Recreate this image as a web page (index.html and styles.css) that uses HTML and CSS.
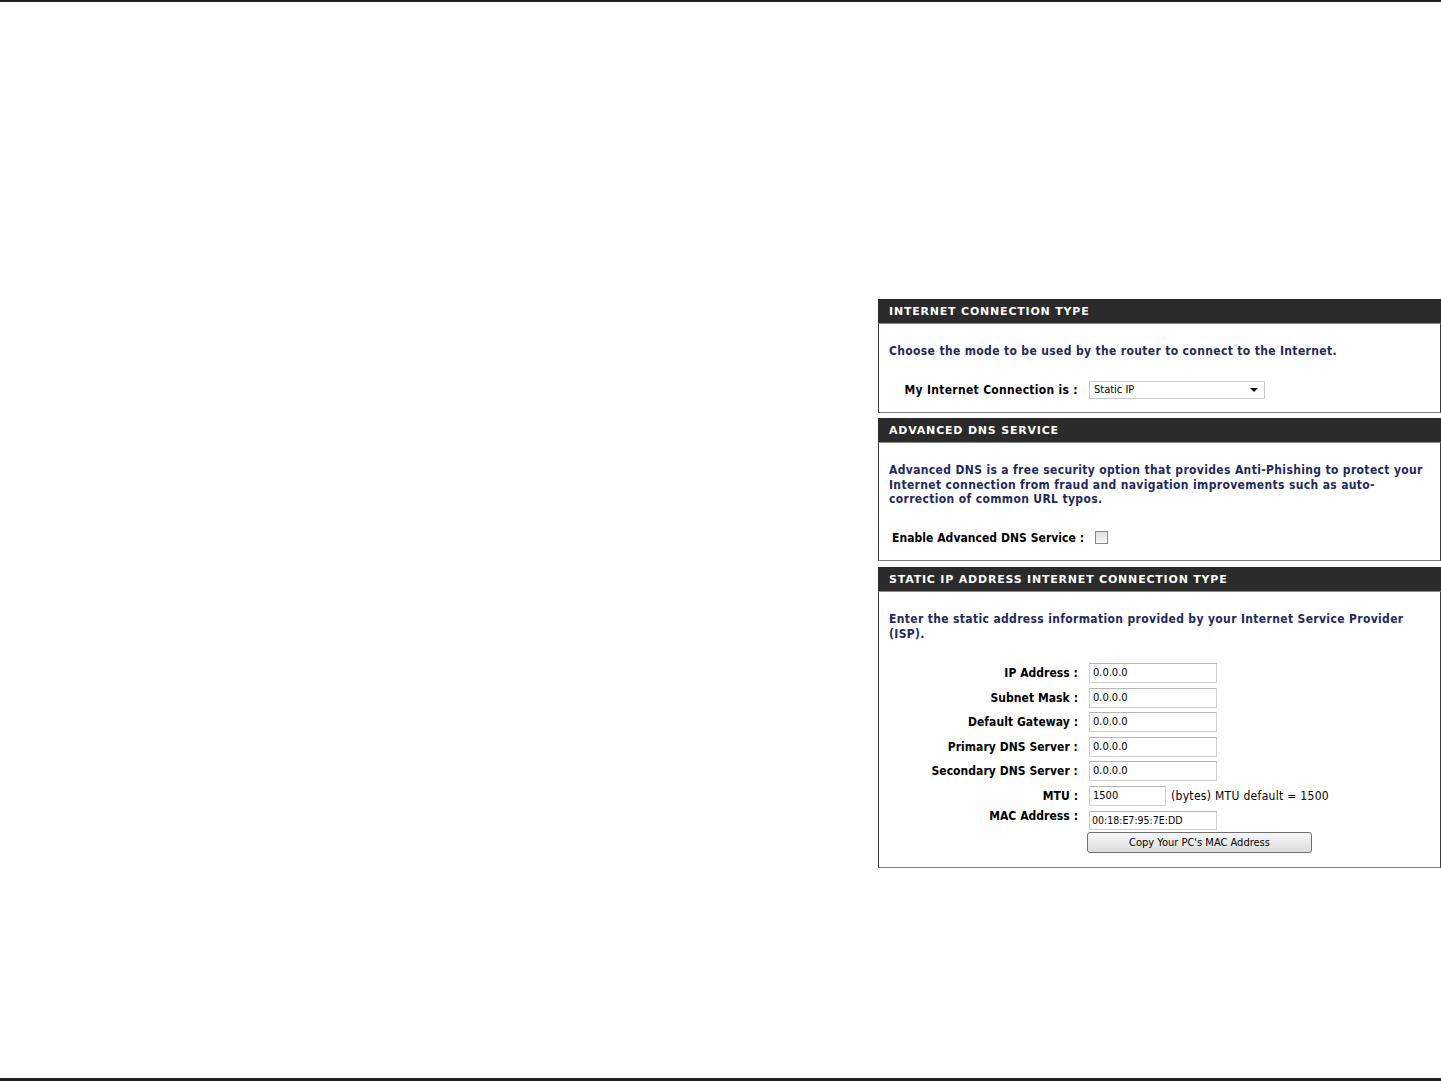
FILE: index.html
```html
<!DOCTYPE html>
<html lang="en">

<head>
    <meta charset="UTF-8">
    <meta name="viewport" content="width=device-width, initial-scale=1.0">
    <title>Internet Connection</title>
    <link rel="stylesheet" href="styles.css">
</head>

<body>
    <div class="pagina">
        <div class="regla-arriba"></div>
        <div class="contenido">
            <div class="vacio"></div>
            <div class="paneles">
                <div class="panel panel-primero">
                    <div class="panel-titulo">INTERNET CONNECTION TYPE</div>
                    <div class="panel-cuerpo panel-tipo">
                        <p class="descripcion">Choose the mode to be used by the router to connect to the Internet.</p>
                        <div class="fila fila-tipo">
                            <span class="etiqueta">My Internet Connection is :</span>
                            <div class="selector">
                                <span>Static IP</span>
                                <span class="flecha"></span>
                            </div>
                        </div>
                    </div>
                </div>

                <div class="panel">
                    <div class="panel-titulo">ADVANCED DNS SERVICE</div>
                    <div class="panel-cuerpo panel-dns">
                        <p class="descripcion">Advanced DNS is a free security option that provides Anti-Phishing to protect your Internet connection from fraud and navigation improvements such as auto-correction of common URL typos.</p>
                        <div class="fila-check">
                            <span class="etiqueta">Enable Advanced DNS Service :</span>
                            <span class="casilla"></span>
                        </div>
                    </div>
                </div>

                <div class="panel">
                    <div class="panel-titulo">STATIC IP ADDRESS INTERNET CONNECTION TYPE</div>
                    <div class="panel-cuerpo panel-ip">
                        <p class="descripcion">Enter the static address information provided by your Internet Service Provider (ISP).</p>
                        <div class="formulario">
                            <span class="etiqueta">IP Address :</span>
                            <div class="campo"><span class="caja">0.0.0.0</span></div>
                            <span class="etiqueta">Subnet Mask :</span>
                            <div class="campo"><span class="caja">0.0.0.0</span></div>
                            <span class="etiqueta">Default Gateway :</span>
                            <div class="campo"><span class="caja">0.0.0.0</span></div>
                            <span class="etiqueta">Primary DNS Server :</span>
                            <div class="campo"><span class="caja">0.0.0.0</span></div>
                            <span class="etiqueta">Secondary DNS Server :</span>
                            <div class="campo"><span class="caja">0.0.0.0</span></div>
                            <span class="etiqueta">MTU :</span>
                            <div class="campo"><span class="caja caja-corta">1500</span><span class="nota">(bytes) MTU default = 1500</span></div>
                            <span class="etiqueta etiqueta-mac">MAC Address :</span>
                            <div class="campo campo-mac">
                                <span class="caja caja-mac">00:18:E7:95:7E:DD</span>
                                <button class="boton-mac">Copy Your PC's MAC Address</button>
                            </div>
                        </div>
                    </div>
                </div>
            </div>
        </div>
        <div class="regla-abajo"></div>
    </div>
</body>

</html>
```

FILE: styles.css
```css
* {
    margin: 0;
    padding: 0;
    box-sizing: border-box;
}

body {
    background-color: #fff;
    font-family: "DejaVu Sans Condensed", "DejaVu Sans", sans-serif;
    font-size: 12px;
    color: #000;
}

.pagina {
    height: 1081px;
    display: flex;
    flex-direction: column;
}

.regla-arriba {
    height: 2px;
    background-color: #231f20;
}

.regla-abajo {
    height: 3px;
    background-color: #231f20;
}

.contenido {
    flex: 1;
    display: grid;
    grid-template-columns: 878px 563px;
    padding-top: 297px;
}

.paneles {
    display: flex;
    flex-direction: column;
    gap: 6px;
}

.panel-primero {
    margin-bottom: -1px;
}

.panel-titulo {
    height: 25px;
    line-height: 26px;
    padding-left: 11px;
    background-color: #2b2b2b;
    border-bottom: 1px solid #8a8a8a;
    color: #fff;
    font-family: "DejaVu Sans", sans-serif;
    font-weight: bold;
    font-size: 11px;
    letter-spacing: 0.8px;
}

.panel-cuerpo {
    border: 1px solid #3a3a3a;
    border-top: none;
    border-bottom-color: #777;
    padding-left: 10px;
}

.descripcion {
    color: #1f2a5c;
    font-weight: bold;
    line-height: 14.5px;
    letter-spacing: 0.35px;
    padding-right: 8px;
}

.etiqueta {
    font-weight: bold;
    text-align: right;
    letter-spacing: 0.05px;
}

.panel-tipo {
    height: 89px;
    padding-top: 20px;
}

.fila-tipo {
    display: flex;
    align-items: center;
    margin-top: 22px;
}

.fila-tipo .etiqueta {
    width: 189px;
    letter-spacing: 0.3px;
}

.selector {
    margin-left: 11px;
    width: 176px;
    height: 18px;
    border: 1px solid #c8c8c8;
    display: flex;
    align-items: center;
    justify-content: space-between;
    padding: 0 6px 0 4px;
    font-size: 11px;
}

.flecha {
    width: 0;
    height: 0;
    border-left: 4px solid transparent;
    border-right: 4px solid transparent;
    border-top: 4px solid #000;
}

.panel-dns {
    height: 118px;
    padding-top: 20px;
}

.fila-check {
    display: flex;
    align-items: center;
    margin-top: 24px;
    padding-left: 3px;
}

.casilla {
    margin-left: 11px;
    width: 13px;
    height: 13px;
    border: 1px solid #8a8a8a;
    background: linear-gradient(#dedede, #fafafa);
}

.panel-ip {
    height: 276px;
    padding-top: 20px;
}

.formulario {
    display: grid;
    grid-template-columns: 189px 1fr;
    column-gap: 11px;
    row-gap: 4.6px;
    align-items: center;
    margin-top: 22px;
}

.campo {
    display: flex;
    align-items: center;
    height: 20px;
}

.caja {
    width: 128px;
    height: 20px;
    line-height: 18px;
    border: 1px solid #cfcfcf;
    border-top-color: #b5b5b5;
    padding-left: 3px;
    font-size: 11px;
}

.caja-corta {
    width: 77px;
}

.nota {
    margin-left: 5px;
    letter-spacing: 0.3px;
}

.etiqueta-mac {
    align-self: start;
    margin-top: -2px;
}

.campo-mac {
    flex-direction: column;
    align-items: flex-start;
    height: auto;
    gap: 2px;
}

.caja-mac {
    height: 19px;
    line-height: 17px;
    padding-left: 2px;
    font-size: 10.5px;
}

.boton-mac {
    width: 225px;
    height: 21px;
    margin-left: -2px;
    border: 1px solid #6e6e6e;
    border-radius: 3px;
    background: linear-gradient(#f7f7f7, #dcdcdc);
    font-family: "DejaVu Sans Condensed", "DejaVu Sans", sans-serif;
    font-size: 11px;
    color: #000;
}
```
